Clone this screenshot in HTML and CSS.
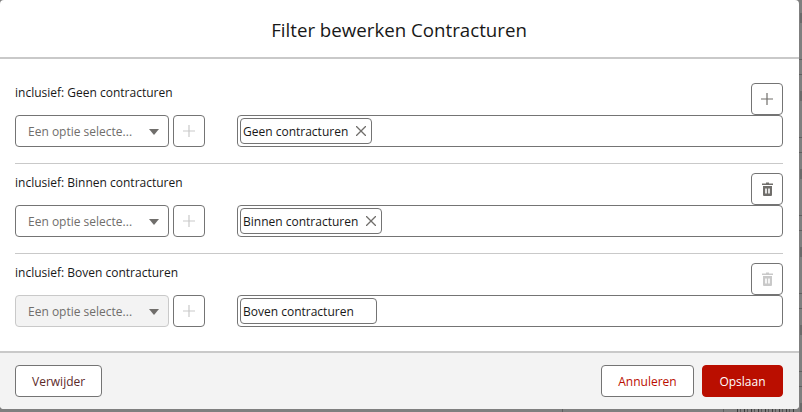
FILE: index.html
```html
<!DOCTYPE html>
<html lang="nl">
<head>
<meta charset="utf-8">
<title>Filter bewerken Contracturen</title>
<link rel="stylesheet" href="styles.css">
</head>
<body>
<div class="modal">
  <header class="modal-header"><h1 class="modal-title">Filter bewerken Contracturen</h1></header>
  <main class="modal-body">
    <section class="filter">
      <div class="filter-top">
        <span class="filter-label">inclusief: Geen contracturen</span>
        <button class="icon-btn" type="button" aria-label="Toevoegen"><svg class="ico-big" viewBox="0 0 12 12"><path d="M6 0v12M0 6h12"/></svg></button>
      </div>
      <div class="controls">
        <div class="select"><span class="select-text">Een optie selecte...</span><span class="caret"></span></div>
        <button class="icon-btn add" type="button" aria-label="Toevoegen"><svg class="ico-big" viewBox="0 0 12 12"><path d="M6 0v12M0 6h12"/></svg></button>
        <div class="pillbox">
          <span class="pill">Geen contracturen<svg class="pill-x" viewBox="0 0 10 10"><path d="M0 0l10 10M10 0L0 10"/></svg></span>
        </div>
      </div>
    </section>
    <section class="filter">
      <div class="filter-top">
        <span class="filter-label">inclusief: Binnen contracturen</span>
        <button class="icon-btn" type="button" aria-label="Verwijderen"><svg class="trash" viewBox="0 0 11 14"><path d="M4 1.500V.5h3v1h4V3H0V1.500z"/><path fill-rule="evenodd" d="M1 4h9v9a1 1 0 0 1-1 1H2a1 1 0 0 1-1-1zM3.200 6.500v5h1.600v-5zm3 0v5h1.600v-5z"/></svg></button>
      </div>
      <div class="controls">
        <div class="select"><span class="select-text">Een optie selecte...</span><span class="caret"></span></div>
        <button class="icon-btn add" type="button" aria-label="Toevoegen"><svg class="ico-big" viewBox="0 0 12 12"><path d="M6 0v12M0 6h12"/></svg></button>
        <div class="pillbox">
          <span class="pill">Binnen contracturen<svg class="pill-x" viewBox="0 0 10 10"><path d="M0 0l10 10M10 0L0 10"/></svg></span>
        </div>
      </div>
    </section>
    <section class="filter last">
      <div class="filter-top">
        <span class="filter-label">inclusief: Boven contracturen</span>
        <button class="icon-btn off" type="button" aria-label="Verwijderen"><svg class="trash" viewBox="0 0 11 14"><path d="M4 1.500V.5h3v1h4V3H0V1.500z"/><path fill-rule="evenodd" d="M1 4h9v9a1 1 0 0 1-1 1H2a1 1 0 0 1-1-1zM3.200 6.500v5h1.600v-5zm3 0v5h1.600v-5z"/></svg></button>
      </div>
      <div class="controls">
        <div class="select disabled"><span class="select-text">Een optie selecte...</span><span class="caret"></span></div>
        <button class="icon-btn add" type="button" aria-label="Toevoegen"><svg class="ico-big" viewBox="0 0 12 12"><path d="M6 0v12M0 6h12"/></svg></button>
        <div class="pillbox">
          <span class="pill wide">Boven contracturen</span>
        </div>
      </div>
    </section>
  </main>
  <footer class="modal-footer">
    <button class="btn" type="button">Verwijder</button>
    <div class="footer-right">
      <button class="btn cancel" type="button">Annuleren</button>
      <button class="btn primary" type="button">Opslaan</button>
    </div>
  </footer>
</div>
</body>
</html>
```

FILE: styles.css
```css
* { box-sizing: border-box; }
html, body { margin: 0; height: 100%; }
body {
  width: 802px;
  height: 412px;
  overflow: hidden;
  background-color: #7f7f7f;
  background-image:
    repeating-linear-gradient(to right, #3c3c3c 0 1px, #7f7f7f 1px 3px, #555 3px 4px, #7f7f7f 4px 7px),
    linear-gradient(#5f5f5f, #5f5f5f), linear-gradient(#5f5f5f, #5f5f5f),
    repeating-linear-gradient(to bottom, #6a6a6a 0 10px, transparent 10px 78px),
    repeating-linear-gradient(to bottom, #5f5f5f 0 1px, transparent 1px 15px, #5f5f5f 15px 16px, transparent 16px 78px);
  background-size: 58px 3px, 1px 3px, 1px 3px, 2px 100%, 100% 100%;
  background-position: 737px 409px, 562px 409px, 723px 409px, 800px 13px, 0 59px;
  background-repeat: no-repeat;
  font-family: "Open Sans", "Noto Sans", sans-serif;
  font-size: 12px;
  color: #181818;
}
.modal {
  width: 799px;
  height: 409px;
  background: #fff;
  border-radius: 4px;
  display: flex;
  flex-direction: column;
  overflow: hidden;
}
.modal-header {
  height: 59px;
  flex: none;
  border-bottom: 2px solid #c9c9c9;
  display: flex;
  align-items: center;
  justify-content: center;
  padding-top: 2px;
}
.modal-title { margin: 0 0 0 -1px; font-size: 18.7px; font-weight: 400; color: #181818; }
.modal-body { flex: 1; padding: 24px 16px 0 15px; }
.filter { border-bottom: 1px solid #c9c9c9; padding-bottom: 16px; margin-bottom: 9px; }
.filter.last { border-bottom: 0; padding-bottom: 0; margin-bottom: 0; }
.filter-top { display: flex; justify-content: space-between; align-items: flex-start; }
.filter-label { padding-top: 1px; line-height: 18px; }
.controls { display: flex; }
.icon-btn {
  width: 32px;
  height: 32px;
  padding: 0;
  background: #fff;
  border: 1px solid #747474;
  border-radius: 4px;
  display: flex;
  align-items: center;
  justify-content: center;
  color: #706e6b;
  flex: none;
}
.icon-btn.add { margin: 0 32px 0 4px; color: #c9c9c9; }
.icon-btn.off { color: #c9c9c9; }
.ico-big { width: 12px; height: 12px; fill: none; stroke: currentColor; stroke-width: 1.2; }
.trash { width: 11px; height: 14px; fill: currentColor; }
.select {
  width: 154px;
  height: 32px;
  border: 1px solid #747474;
  border-radius: 4px;
  background: #fff;
  display: flex;
  align-items: center;
  padding: 0 9px 0 12px;
  justify-content: space-between;
  flex: none;
  color: #706e6b;
}
.select.disabled { background: #f3f3f3; border-color: #c9c9c9; }
.caret {
  width: 0;
  height: 0;
  border-left: 5px solid transparent;
  border-right: 5px solid transparent;
  border-top: 6px solid #706e6b;
  margin-top: 1px;
}
.pillbox {
  flex: 1;
  height: 32px;
  border: 1px solid #747474;
  border-radius: 4px;
  background: #fff;
  padding: 2px;
  display: flex;
}
.pill {
  height: 26px;
  border: 1px solid #747474;
  border-radius: 4px;
  display: flex;
  align-items: center;
  gap: 8px;
  padding: 0 5px 0 2px;
  background: #fff;
}
.pill.wide { width: 137px; }
.pill-x { width: 10px; height: 10px; fill: none; stroke: #706e6b; stroke-width: 1.3; }
.modal-footer {
  height: 58px;
  flex: none;
  background: #f3f3f3;
  border-top: 2px solid #c9c9c9;
  padding: 12px 16px 0 15px;
  display: flex;
  justify-content: space-between;
  align-items: flex-start;
}
.footer-right { display: flex; gap: 8px; }
.btn {
  height: 32px;
  padding: 0 16px;
  border: 1px solid #747474;
  border-radius: 4px;
  background: #fff;
  font: inherit;
  color: #5c2a2a;
}
.btn.cancel { color: #ba0e00; width: 93px; padding: 0; }
.btn.primary { background: #ba0e00; border-color: #ba0e00; color: #fff; width: 81px; padding: 0; }
```
